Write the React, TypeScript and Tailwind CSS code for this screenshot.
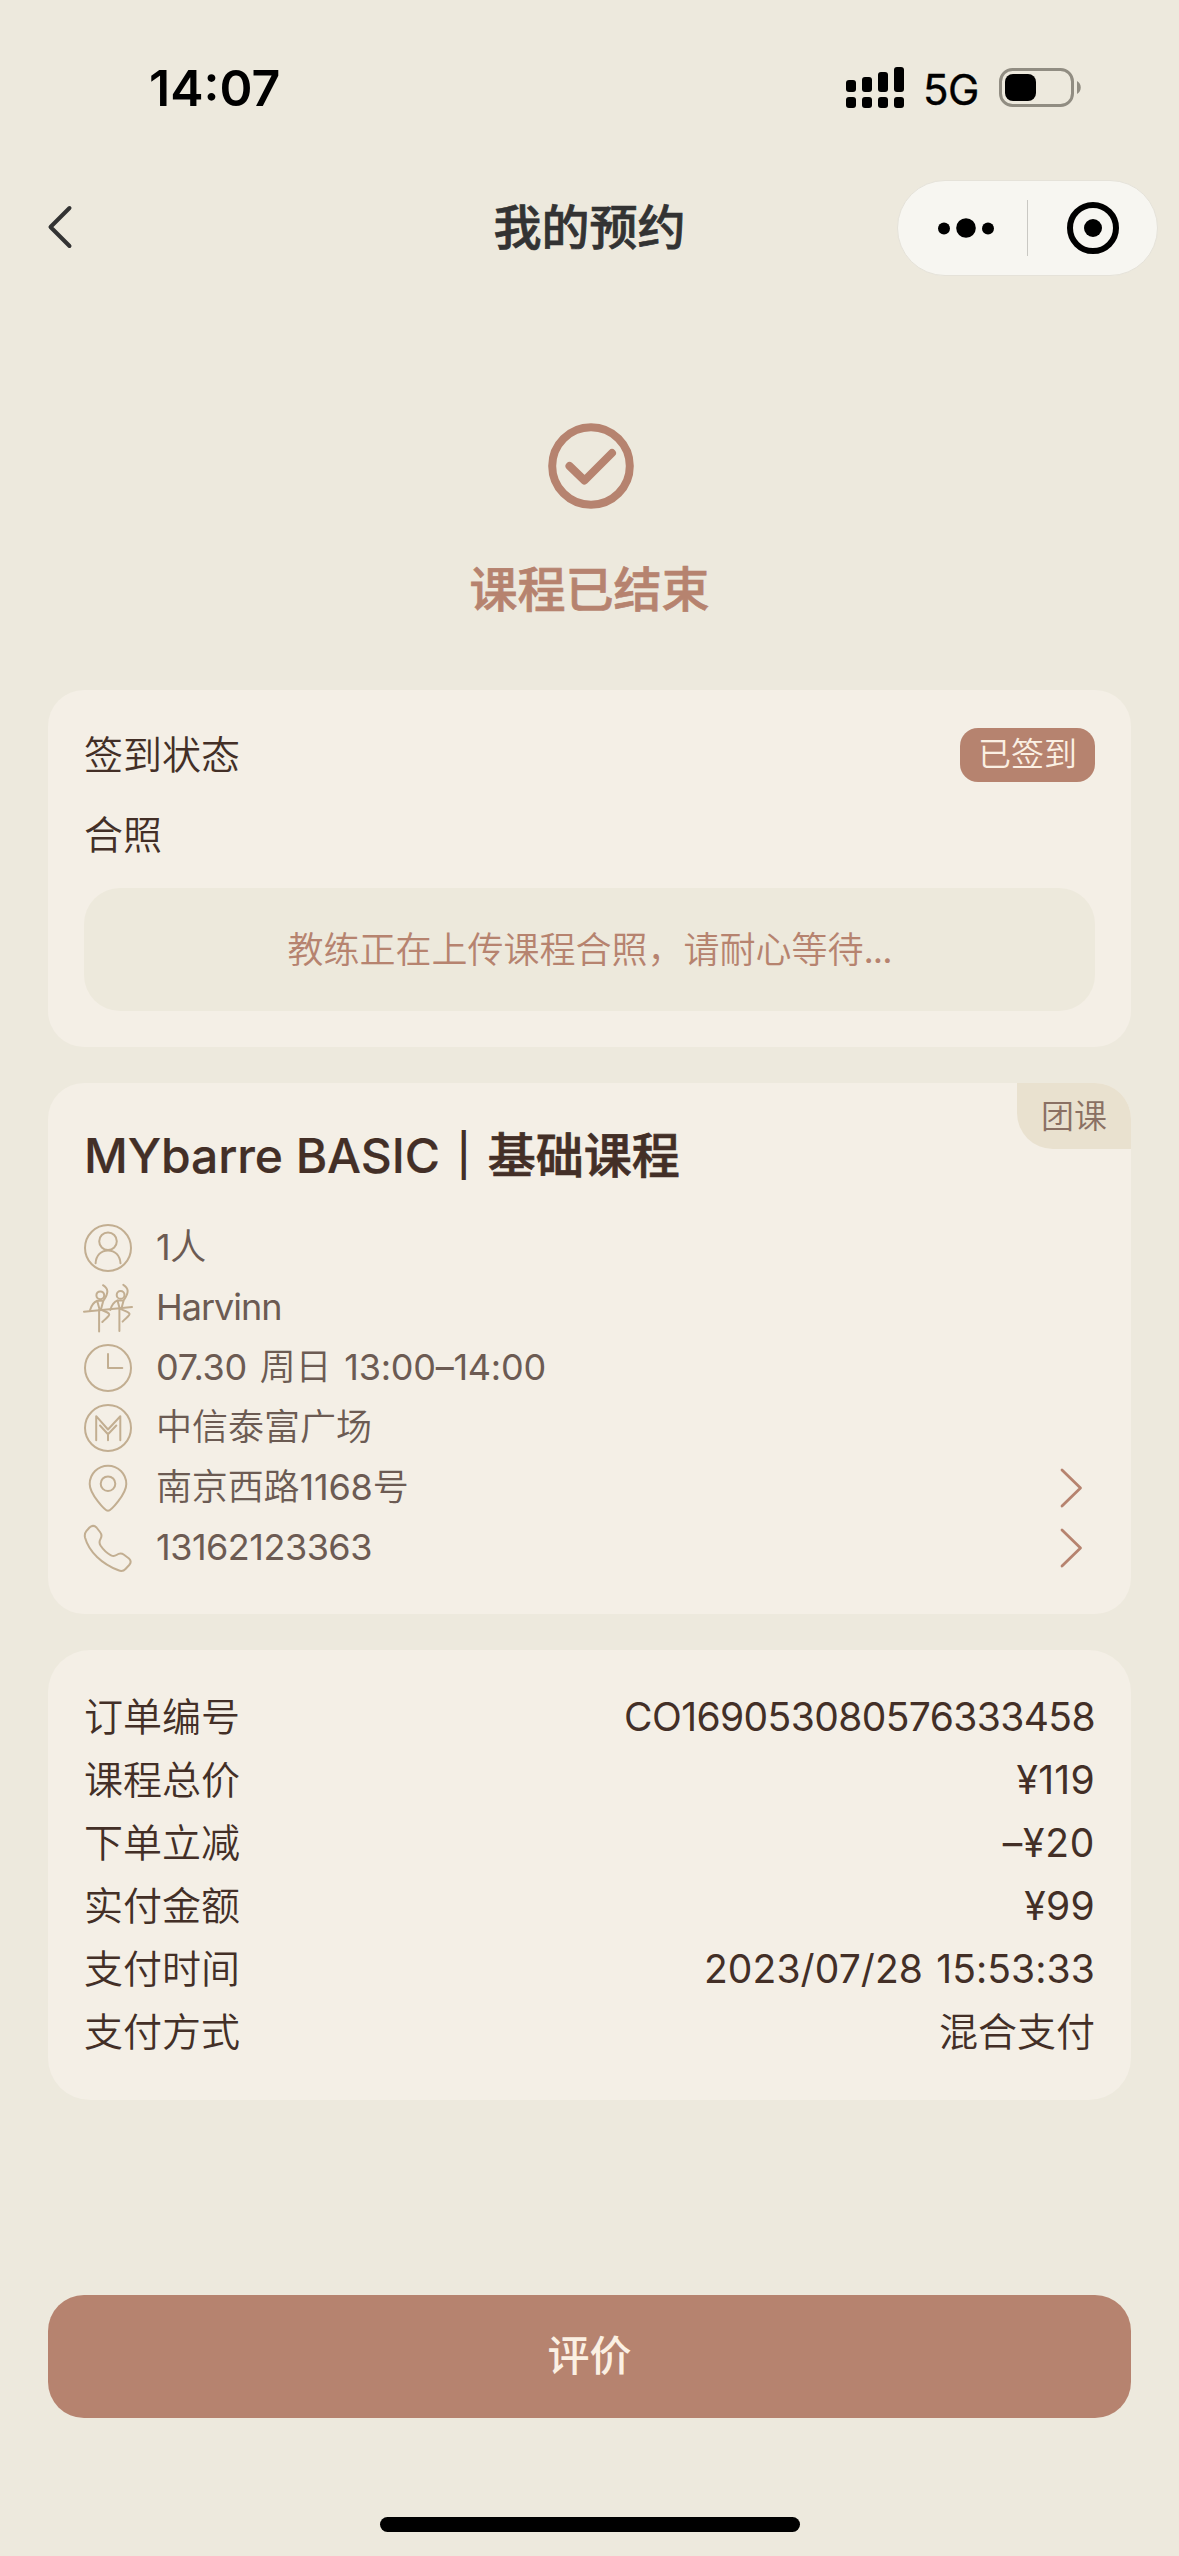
import type { ReactNode } from "react";

const details = [
  { icon: "person", text: "1人", spacing: "tracking-[-0.5px]", arrow: false },
  { icon: "coach", text: "Harvinn", spacing: "tracking-[-1px]", arrow: false },
  { icon: "clock", text: "07.30 周日 13:00–14:00", spacing: "tracking-[-0.25px] [word-spacing:3px]", arrow: false },
  { icon: "studio", text: "中信泰富广场", spacing: "tracking-normal", arrow: false },
  { icon: "pin", text: "南京西路1168号", spacing: "tracking-[-0.15px]", arrow: true },
  { icon: "phone", text: "13162123363", spacing: "tracking-[-0.5px]", arrow: true },
];

const orderRows = [
  { label: "订单编号", value: "CO169053080576333458", spacing: "tracking-[-0.6px]" },
  { label: "课程总价", value: "¥119", spacing: "tracking-[0.3px]" },
  { label: "下单立减", value: "–¥20", spacing: "tracking-[0.7px]" },
  { label: "实付金额", value: "¥99", spacing: "tracking-[0.3px]" },
  { label: "支付时间", value: "2023/07/28 15:53:33", spacing: "tracking-[0.1px] [word-spacing:2px]" },
  { label: "支付方式", value: "混合支付", spacing: "tracking-normal" },
];

const dancer = (
  <>
    <circle cx="16.3" cy="11.3" r="3.9" />
    <path d="M19 1.2C24.5 4.5 25 9 19.3 16.8L17 25.3M13.2 16.8L15.5 25.3M13.2 16.8H19.3M13.2 16.8C9.5 18.3 7.5 21 6 26.3M15.1 25.5V47.5M17 25.8C20 27 24 28 25.2 30.2C25.8 32 21.5 34.5 18.3 38" />
  </>
);

const icons: Record<string, ReactNode> = {
  person: (
    <>
      <circle cx="24" cy="24" r="23" />
      <circle cx="24" cy="17.3" r="8.8" />
      <path d="M11.6 39.3C12 31.5 17 26.4 24 26.4S36 31.5 36.5 39.3" />
    </>
  ),
  coach: (
    <>
      <path d="M0 27.7L48 23" />
      {dancer}
      <g transform="translate(20.3 -0.4)">{dancer}</g>
    </>
  ),
  clock: (
    <>
      <circle cx="24" cy="24" r="23" />
      <path d="M24 10V24H38.3" />
    </>
  ),
  studio: (
    <>
      <circle cx="24" cy="24" r="23" />
      <path d="M12.2 36.3V12.2L24 25.5L36.3 12.2V36.3M16 21.5L24 30.2L32.3 21.5M24 30.2V36.3" />
    </>
  ),
  pin: (
    <>
      <path d="M24 46.8C21 46.8 5.7 30 5.7 20A18.3 18.3 0 0 1 42.3 20C42.3 30 27 46.8 24 46.8Z" />
      <circle cx="24" cy="19.7" r="7.3" />
    </>
  ),
  phone: (
    <path d="M5.5 3.5C8 1.4 10.5 1.4 12.5 3.5L16 8C18 10.5 18 12.5 16.5 15C15 17.5 15 19 16.5 21.5C19.5 26 22.5 29 27 31.3C29 32.3 30.5 32.3 32.5 31C35.5 29 37.5 29 40 30.8L45 34.5C47 36.3 47 38.8 45.2 41L41.5 45C39.5 47.1 37 47.3 34.5 46.3C18 40 5 28 1 13.5C.5 11 .8 9 2.3 7.2Z" />
  ),
};

// 汉字用细一档的字重，数字和字母保持常规
const MixedText = ({ text, className }: { text: string; className: string }) => (
  <span className={`whitespace-pre ${className}`}>
    {text.split(/([\u4e00-\u9fff]+)/).map((part, i) => (
      <span key={i} className={i % 2 ? "font-[350]" : "font-normal"}>
        {part}
      </span>
    ))}
  </span>
);

const StatusBar = () => (
  <div className="flex h-[140px] items-start justify-between pr-[97px] pl-[149px] text-black">
    <span className="mt-[58px] text-[50px] leading-[60px] font-semibold">14:07</span>
    <div className="mt-[64px] flex h-[48px] items-center">
      <svg className="h-[42px] w-[58px]" viewBox="0 0 58 42">
        <rect x="0" y="13" width="10" height="12" rx="3" />
        <rect x="16" y="10" width="10" height="15" rx="3" />
        <rect x="32" y="5" width="10" height="20" rx="3" />
        <rect x="48" y="0" width="10" height="25" rx="3" />
        <rect x="0" y="30" width="10" height="11" rx="3" />
        <rect x="16" y="30" width="10" height="11" rx="3" />
        <rect x="32" y="30" width="10" height="11" rx="3" />
        <rect x="48" y="30" width="10" height="11" rx="3" />
      </svg>
      <span className="mt-[3px] ml-[19px] w-[76px] text-[42px] leading-[48px] font-normal tracking-[-0.5px] [-webkit-text-stroke:0.4px]">5G</span>
      <svg className="h-[40px] w-[83px]" viewBox="0 0 83 40">
        <rect x="1.5" y="1.5" width="72" height="36" rx="12" fill="none" stroke="#918d82" strokeWidth="3" />
        <rect x="6" y="6" width="31" height="27" rx="8" />
        <path d="M78 13C83 15.5 83 23.5 78 26Z" fill="#918d82" />
      </svg>
    </div>
  </div>
);

const NavBar = () => (
  <div className="mt-[40px] grid h-[96px] grid-cols-[1fr_auto_1fr] items-center px-[21px]">
    <svg className="mb-[2px] ml-[26px] h-[44px] w-[26px]" viewBox="0 0 26 44" fill="none" stroke="#333333" strokeWidth="4" strokeLinecap="round" strokeLinejoin="round">
      <path d="M22.5 3L3.5 22L22.5 41" />
    </svg>
    <h1 className="text-[48px] leading-[60px] font-medium text-[#333333] [-webkit-text-stroke:0.7px]">我的预约</h1>
    <div className="flex h-[96px] w-[261px] items-center justify-self-end rounded-full border border-[#e5e2d9] bg-[#f7f6f1]">
      <svg className="h-[60px] w-[258px]" viewBox="0 0 258 60">
        <circle cx="46" cy="30.5" r="6" />
        <circle cx="68" cy="30" r="9.8" />
        <circle cx="90" cy="30.5" r="6" />
        <path d="M129.5 2V58" stroke="#c9c8c3" strokeWidth="1" />
        <circle cx="195" cy="30" r="23" fill="none" stroke="#000" strokeWidth="6" />
        <circle cx="195" cy="30" r="9" />
      </svg>
    </div>
  </div>
);

const App = () => {
  return (
    <div className="flex h-[2556px] w-[1179px] flex-col overflow-hidden bg-[#ede9dd] font-['Inter','Noto_Sans_CJK_SC',sans-serif] font-[350] text-[#432f27]">
      <StatusBar />
      <NavBar />

      <div className="flex flex-col items-center pt-[147px] text-[#b6836f]">
        <svg className="ml-[2px] h-[86px] w-[86px]" viewBox="0 0 86 86" fill="none" stroke="currentColor" strokeWidth="8">
          <circle cx="43" cy="43" r="38.8" />
          <path d="M21.5 43L36.5 57.5L64 30" strokeLinecap="round" strokeLinejoin="round" />
        </svg>
        <div className="mt-[51px] text-[48px] leading-[60px] font-medium [-webkit-text-stroke:0.7px]">课程已结束</div>
      </div>

      <main className="mt-[70px] flex flex-col gap-9 px-12">
        {/* 签到 */}
        <section className="h-[357px] rounded-[36px] bg-[#f4efe6] px-9 pt-9 text-[39px]">
          <div className="flex h-[58px] items-center justify-between">
            <span>签到状态</span>
            <span className="flex h-[54px] items-center rounded-[18px] bg-[#b6836f] px-[18px] text-[33px] text-[#fbf0e3]">
              已签到
            </span>
          </div>
          <div className="mt-[22px] h-[58px] leading-[58px]">合照</div>
          <div className="mt-[24px] flex h-[123px] items-center justify-center rounded-[36px] bg-[#ede9dc] text-[36px] text-[#b6836f]">
            教练正在上传课程合照，请耐心等待<span className="font-normal tracking-[-1px]">...</span>
          </div>
        </section>

        {/* 课程信息 */}
        <section className="relative h-[531px] rounded-[36px] bg-[#f4efe6] px-9 pt-[43px]">
          <div className="absolute top-0 right-0 flex h-[66px] w-[114px] items-center justify-center rounded-tr-[36px] rounded-bl-[36px] bg-[#e9e1cf] pt-[2px] text-[33px] text-[#8a7063]">
            团课
          </div>
          <h2 className="h-[60px] text-[48px] leading-[60px] font-medium">
            <span className="tracking-[-0.1px] [-webkit-text-stroke:0.2px]">MYbarre BASIC</span>
            <span className="[-webkit-text-stroke:2px]">｜</span>
            <span className="[-webkit-text-stroke:0.7px]">基础课程</span>
          </h2>
          <ul className="mt-[32px]">
            {details.map((item) => (
              <li key={item.icon} className="flex h-[60px] items-center text-[36px] text-[#6c5b53]">
                <svg
                  className="mr-6 h-[48px] w-[48px] overflow-visible"
                  viewBox="0 0 48 48"
                  fill="none"
                  stroke="#c2ae91"
                  strokeWidth="2"
                  strokeLinecap="round"
                  strokeLinejoin="round"
                >
                  {icons[item.icon]}
                </svg>
                <MixedText text={item.text} className={`mb-[2px] flex-1 ${item.spacing}`} />
                {item.arrow && (
                  <svg className="mr-[12px] h-[40px] w-[24px]" viewBox="0 0 24 40" fill="none" stroke="#b6836f" strokeWidth="2.8" strokeLinecap="round" strokeLinejoin="round">
                    <path d="M3 2L21.5 20L3 38" />
                  </svg>
                )}
              </li>
            ))}
          </ul>
        </section>

        {/* 订单信息 */}
        <section className="h-[450px] rounded-[42px] bg-[#f4efe6] px-9 pt-9">
          {orderRows.map((row) => (
            <div key={row.label} className="flex h-[63px] items-center justify-between text-[39px]">
              <span>{row.label}</span>
              <MixedText text={row.value} className={row.spacing} />
            </div>
          ))}
        </section>
      </main>

      <button className="mx-12 mt-[195px] h-[123px] shrink-0 rounded-[36px] bg-[#b6836f] pb-[3px] text-[42px] font-medium text-[#fbf0e3]">
        评价
      </button>
      <div className="mt-[99px] h-[15px] w-[420px] shrink-0 self-center rounded-full bg-black" />
    </div>
  );
};

export default App;
